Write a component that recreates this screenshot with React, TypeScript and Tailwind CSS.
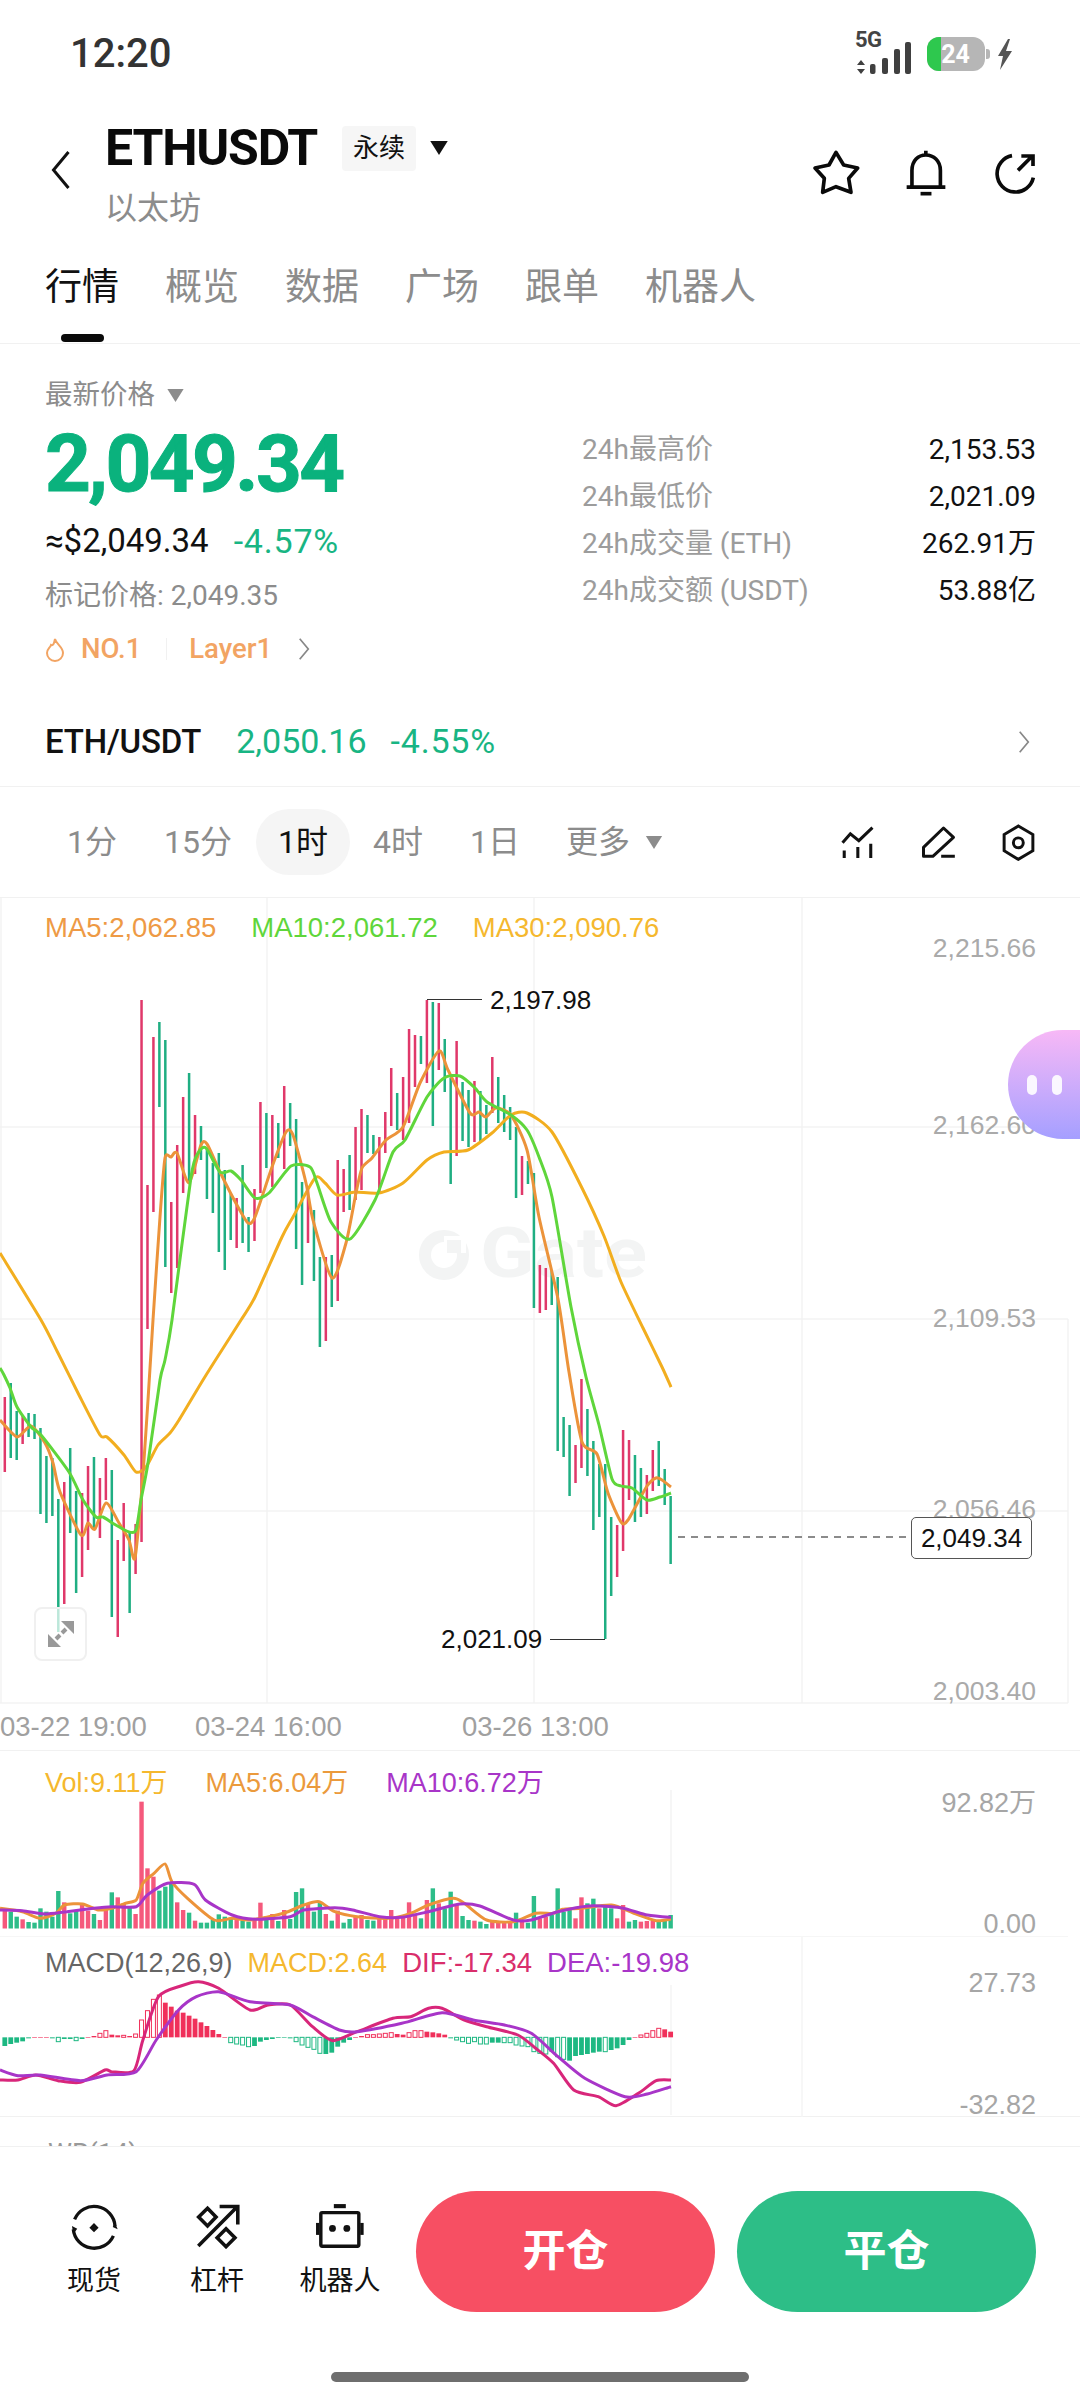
import React from "react";

type P = [number, number];

const CANDLES = "r1397,1472 g1383,1458 g1411,1460 r1415,1444 g1413,1437 g1414,1439 g1428,1514 g1456,1523 g1458,1516 g1499,1632 r1482,1604 g1448,1533 g1491,1593 r1493,1577 r1466,1550 g1457,1529 r1478,1538 r1458,1500 g1470,1617 r1540,1637 r1503,1561 g1533,1613 r1524,1574 r1000,1542 r1185,1329 r1037,1212 g1022,1107 g1040,1267 r1202,1293 r1145,1268 r1097,1193 g1073,1183 r1115,1174 g1126,1160 g1148,1199 g1163,1213 g1153,1252 g1170,1270 g1193,1240 r1198,1248 g1165,1243 g1217,1252 r1189,1241 r1102,1193 g1113,1168 r1115,1187 g1123,1158 r1086,1169 g1103,1146 g1119,1249 g1182,1285 r1190,1243 g1210,1281 g1257,1347 r1257,1341 g1255,1307 r1160,1301 r1169,1212 g1155,1210 r1127,1200 r1109,1190 g1115,1153 g1135,1154 r1137,1193 r1112,1153 r1068,1126 g1093,1130 r1077,1140 r1029,1123 r1035,1087 g1036,1064 r1000,1083 g1002,1126 r1003,1070 g1039,1092 g1078,1184 r1041,1156 g1082,1141 g1090,1147 r1081,1142 g1091,1141 g1105,1134 r1057,1113 g1077,1123 g1095,1132 g1107,1140 g1127,1198 r1156,1195 g1161,1184 g1173,1308 r1265,1313 r1268,1310 g1270,1305 g1277,1451 g1417,1457 g1425,1496 r1445,1483 r1379,1468 g1409,1476 g1441,1530 g1464,1517 g1464,1639 g1517,1596 r1525,1577 r1430,1551 r1440,1500 g1455,1522 g1468,1517 r1475,1514 r1450,1491 g1441,1486 g1469,1505 g1496,1564"
  .split(" ")
  .map((s) => {
    const [a, b] = s.slice(1).split(",").map(Number);
    return { red: s[0] === "r", a, b };
  });

const VOLS = "r510 g515 g530 r538 g546 g548 g505 g515 g530 g453 r487 g520 g510 r490 r512 g522 r540 r505 g457 r472 r490 g500 r522 r185 r385 r410 g452 g440 g430 r487 r510 g518 r542 g548 g548 g540 g523 g530 g535 r540 g542 g545 r535 r488 g530 r522 g543 r510 g537 g456 g445 r490 g515 g488 r522 g542 r512 g548 g537 r530 r525 g540 g542 r530 r530 r510 r530 r525 r487 r525 g535 r480 g445 r490 g505 g455 r495 g528 g540 r542 g545 g552 r545 r548 r545 r545 g518 r540 g548 g468 r535 r530 g525 g445 g515 g510 r535 r472 g490 g476 r505 g500 g505 r535 r495 g545 g540 r545 r543 r543 g543 g540 g525"
  .split(" ")
  .map((s) => ({ red: s[0] === "r", top: Number(s.slice(1)) }));

const HIST = "918 912 908 904 895 892 892 892 895 905h 897 897 902h 897 891 888 880h 872h 884 886 886h 888 882h 840h 812h 778h 765h 788 800 812 818 827 836 847 858 870 882 892 908h 912h 915h 920h 918 905 900 897 894 893 895 905h 915h 922h 928h 940h 942 938 920 908 900 892 888 884h 884h 882h 880h 878h 882 884 878h 872h 872h 875 877 880 884 895 900h 905h 910h 905h 912h 912h 908 908 908h 908h 915h 918h 920h 935h 940h 942h 935 950h 958h 962 948 945 942 938 935 935h 930 925 915 900 892 885h 880h 872h 865h 868 875"
  .split(" ")
  .map((s) => ({ v: parseFloat(s), hollow: s.endsWith("h") }));

const MA30: P[] = [[0,1253],[41,1320],[58,1353],[79,1395],[100,1435],[107,1437],[124,1455],[136,1472],[146,1467],[158,1445],[170,1433],[179,1420],[203,1380],[220,1353],[241,1320],[255,1297],[282,1237],[293,1217],[315,1178],[325,1183],[337,1195],[355,1192],[379,1193],[403,1183],[427,1160],[444,1152],[468,1150],[492,1133],[511,1115],[527,1113],[552,1132],[582,1188],[604,1236],[621,1282],[643,1328],[662,1367],[671,1387]];
const MA10: P[] = [[0,1368],[4,1375],[10,1388],[17,1407],[31,1427],[41,1435],[69,1472],[83,1500],[96,1517],[103,1517],[114,1524],[129,1532],[136,1530],[141,1500],[148,1463],[160,1380],[165,1360],[172,1320],[191,1177],[198,1153],[206,1148],[220,1172],[231,1171],[241,1180],[255,1198],[269,1193],[291,1166],[310,1167],[317,1183],[331,1222],[350,1239],[375,1200],[393,1152],[405,1140],[427,1097],[444,1078],[460,1076],[475,1088],[487,1102],[511,1115],[527,1130],[539,1157],[552,1197],[571,1307],[586,1377],[599,1425],[612,1479],[621,1486],[632,1488],[647,1500],[660,1497],[671,1493]];
const MA5: P[] = [[0,1420],[17,1437],[31,1426],[45,1443],[53,1463],[60,1492],[81,1535],[88,1523],[95,1529],[106,1503],[119,1523],[129,1540],[135,1558],[142,1487],[148,1400],[153,1320],[160,1217],[165,1158],[171,1157],[177,1153],[189,1183],[201,1145],[207,1144],[220,1172],[238,1207],[248,1223],[255,1217],[272,1167],[286,1132],[293,1135],[306,1183],[313,1220],[332,1278],[346,1243],[356,1193],[362,1168],[372,1158],[386,1140],[403,1127],[420,1083],[439,1051],[448,1070],[470,1113],[479,1112],[486,1117],[496,1108],[511,1115],[527,1150],[539,1217],[558,1299],[569,1372],[582,1442],[597,1454],[608,1493],[621,1522],[628,1520],[647,1486],[656,1478],[662,1480],[671,1487]];

const z6 = (pts: P[]): P[] => pts.map(([x, y]) => [x / 2.24, 1740 + y / 3]);
const VMA5 = z6([[0,505],[50,515],[90,535],[125,520],[145,495],[185,492],[220,510],[250,505],[280,490],[305,480],[320,430],[345,400],[370,372],[385,425],[420,475],[480,540],[520,535],[560,540],[635,520],[680,495],[715,485],[750,515],[800,530],[870,535],[920,520],[960,495],[1015,475],[1040,490],[1090,540],[1150,545],[1200,520],[1240,520],[1260,508],[1300,505],[1370,495],[1420,520],[1470,542],[1503,537]]);
const VMA10 = z6([[0,510],[50,512],[100,522],[150,515],[210,505],[250,500],[305,500],[330,465],[375,430],[435,433],[460,480],[520,525],[570,538],[650,530],[680,510],[750,503],[790,510],[850,530],[900,532],[960,515],[1030,492],[1075,498],[1150,540],[1190,540],[1250,515],[1320,498],[1390,503],[1450,525],[1503,532]]);
const DIF = z6([[0,1020],[40,1020],[80,1005],[130,1022],[180,1027],[235,990],[250,995],[300,992],[320,900],[355,770],[405,738],[445,725],[490,745],[560,810],[600,795],[650,795],[700,860],[745,902],[800,875],[880,835],[920,830],[960,805],[990,805],[1040,840],[1090,860],[1160,885],[1200,925],[1240,970],[1285,1050],[1340,1070],[1380,1097],[1430,1060],[1470,1022],[1503,1020]]);
const DEA = z6([[0,990],[40,1007],[90,1005],[180,1022],[240,1005],[305,995],[350,900],[400,810],[440,770],[490,755],[560,785],[650,795],[700,830],[760,870],[800,875],[900,850],[990,818],[1060,840],[1130,855],[1190,880],[1250,950],[1310,1015],[1400,1070],[1450,1062],[1503,1040]]);

const cx = (i: number) => 4.8 + 5.945 * i;

function smooth(pts: P[]): string {
  let d = `M${pts[0][0]} ${pts[0][1]}`;
  for (let i = 0; i < pts.length - 1; i++) {
    const p0 = pts[Math.max(0, i - 1)];
    const p1 = pts[i];
    const p2 = pts[i + 1];
    const p3 = pts[Math.min(pts.length - 1, i + 2)];
    const t = 0.12;
    d += ` C${(p1[0] + (p2[0] - p0[0]) * t).toFixed(1)} ${(p1[1] + (p2[1] - p0[1]) * t).toFixed(1)} ${(p2[0] - (p3[0] - p1[0]) * t).toFixed(1)} ${(p2[1] - (p3[1] - p1[1]) * t).toFixed(1)} ${p2[0].toFixed(1)} ${p2[1].toFixed(1)}`;
  }
  return d;
}

const Chev = ({ className }: { className: string }) => (
  <svg viewBox="0 0 14 28" className={className} fill="none" stroke="currentColor" strokeWidth="2">
    <path d="M2 2 L12 14 L2 26" />
  </svg>
);

const Tri = ({ className }: { className: string }) => (
  <svg viewBox="0 0 20 16" className={className} fill="currentColor">
    <path d="M0 0 H20 L10 16 Z" />
  </svg>
);

function StatusBar() {
  return (
    <div className="flex h-[108px] items-center justify-between pl-[70px] pr-[68px]">
      <span className="text-[40px] font-medium leading-none text-[#333]">12:20</span>
      <div className="flex items-center">
        <div className="relative h-[40px] w-[58px]">
          <span className="absolute left-0 top-[-6px] text-[22px] font-bold leading-[24px] tracking-[-0.5px] text-[#444]">5G</span>
          <svg viewBox="855 30 58 40" className="h-[40px] w-[58px]" fill="#404040">
            <path d="M857 61 L861 56 L865 61 Z M857 65 L861 70 L865 65 Z" />
            <rect x="870" y="60" width="5.5" height="10" rx="2" />
            <rect x="882" y="54" width="6" height="16" rx="2" />
            <rect x="894" y="45" width="6" height="25" rx="2" />
            <rect x="905" y="38" width="6" height="32" rx="2" />
          </svg>
        </div>
        <div className="ml-[14px] flex items-center">
          <div className="relative flex h-[34px] w-[58px] items-center overflow-hidden rounded-[12px] bg-[#b6b6b6]">
            <div className="h-full w-[14px] bg-[#2ec84e]" />
            <span className="absolute left-[14px] w-[29px] text-center text-[25px] font-bold leading-none text-white">24</span>
          </div>
          <div className="ml-[1px] h-[10px] w-[4px] rounded-r-[3px] bg-[#b6b6b6]" />
        </div>
        <svg viewBox="0 0 15 31" className="ml-[7px] h-[31px] w-[15px]" fill="#555">
          <path d="M11 0 L1 17 H6 L3 31 L15 12 H9 L13 0 Z" />
        </svg>
      </div>
    </div>
  );
}

function Header() {
  return (
    <div className="flex h-[143px] items-start pl-[50px] pr-[44px]">
      <Chev className="mt-[41px] h-[42px] w-[22px] -scale-x-100 text-[#111]" />
      <div className="ml-[33px] flex flex-col">
        <div className="flex h-[80px] items-center">
          <span className="text-[50px] font-bold leading-none tracking-[-1.2px] text-[#0a0a0a]">ETHUSDT</span>
          <span className="ml-[25px] flex h-[45px] w-[74px] items-center justify-center rounded-[4px] bg-[#f6f6f6] text-[26px] text-[#111]">永续</span>
          <Tri className="ml-[13px] h-[14px] w-[20px] text-[#111]" />
        </div>
        <span className="mt-[-2px] text-[32px] leading-[44px] text-[#8c8c8c]">以太坊</span>
      </div>
      <div className="ml-auto mt-[40px] flex items-center">
        <svg viewBox="30 52 150 150" className="h-[50px] w-[50px]" fill="none" stroke="#0a0a0a" strokeWidth="11" strokeLinejoin="round">
          <path d="M105 65 L128 103 L170 112 L143 143 L150 185 L105 168 L65 185 L70 143 L42 112 L84 103 Z" />
        </svg>
        <svg viewBox="310 50 130 145" className="ml-[44px] h-[48px] w-[43px]" fill="none" stroke="#0a0a0a" strokeWidth="11">
          <path d="M373 55 V70 M331 162 V115 C331 85 350 68 373 68 C396 68 417 85 417 115 V162 M315 165 H432" />
          <path d="M357 185 H390" />
        </svg>
        <svg viewBox="572 60 132 132" className="ml-[44px] h-[44px] w-[44px]" fill="none" stroke="#0a0a0a" strokeWidth="11">
          <path d="M632 74 A55 55 0 1 0 696 140" />
          <path d="M650 118 L690 78 M660 75 H695 V105" />
        </svg>
      </div>
    </div>
  );
}

function Tabs() {
  const tabs = ["概览", "数据", "广场", "跟单", "机器人"];
  return (
    <div className="flex h-[93px] gap-[46px] border-b border-[#f1f1f1] pl-[45px] text-[37px] leading-[74px] text-[#8c8c8c]">
      <div className="flex flex-col items-center text-[#111]">
        <span>行情</span>
        <span className="mt-[9px] h-[8px] w-[43px] rounded-full bg-[#0a0a0a]" />
      </div>
      {tabs.map((t) => (
        <span key={t}>{t}</span>
      ))}
    </div>
  );
}

function Stat({ k, v }: { k: string; v: string }) {
  return (
    <div className="flex h-[47px] items-center justify-between">
      <span className="text-[#9c9c9c]">{k}</span>
      <span className="text-[#111]">{v}</span>
    </div>
  );
}

function Info() {
  return (
    <div className="flex h-[353px] pl-[45px] pr-[44px] pt-[31px] text-[27.5px]">
      <div className="flex w-[537px] flex-col">
        <div className="flex h-[40px] items-center text-[#8c8c8c]">
          <span>最新价格</span>
          <Tri className="ml-[12px] h-[13px] w-[17px] text-[#8c8c8c]" />
        </div>
        <div className="flex h-[98px] items-center text-[80px] font-bold leading-none tracking-[-2.6px] text-[#0ab27d] [-webkit-text-stroke:1px_#0ab27d]">2,049.34</div>
        <div className="flex h-[56px] items-center">
          <span className="text-[33px] text-[#111]">≈$2,049.34</span>
          <span className="ml-[25px] text-[34px] tracking-[0.8px] text-[#18b583]">-4.57%</span>
        </div>
        <div className="flex h-[54px] items-center text-[28px] text-[#8c8c8c]">标记价格: 2,049.35</div>
        <div className="flex h-[52px] items-center text-[#f2a463]">
          <svg viewBox="0 0 20 25" className="h-[25px] w-[20px]" fill="none" stroke="#f2a463" strokeWidth="2">
            <path d="M10 2 C11 7 18 10 18 16 a8 8 0 0 1 -16 0 C2 12 5 11 6 8 C8 9 9 7 10 2Z" />
          </svg>
          <span className="ml-[16px] font-medium">NO.1</span>
          <span className="ml-[25px] h-[22px] w-[1px] bg-[#f1f1f1]" />
          <span className="ml-[22px] font-medium">Layer1</span>
          <Chev className="ml-[26px] h-[24px] w-[12px] text-[#888]" />
        </div>
      </div>
      <div className="mt-[51px] flex-1 text-[28px]">
        <Stat k="24h最高价" v="2,153.53" />
        <Stat k="24h最低价" v="2,021.09" />
        <Stat k="24h成交量 (ETH)" v="262.91万" />
        <Stat k="24h成交额 (USDT)" v="53.88亿" />
      </div>
    </div>
  );
}

function SpotRow() {
  return (
    <div className="flex h-[90px] items-center border-b border-[#f1f1f1] pl-[45px] pr-[50px] text-[34px]">
      <span className="text-[33px] font-medium tracking-[-0.2px] text-[#111]">ETH/USDT</span>
      <span className="ml-[35px] text-[#18b583]">2,050.16</span>
      <span className="ml-[24px] tracking-[0.8px] text-[#18b583]">-4.55%</span>
      <Chev className="ml-auto h-[24px] w-[12px] text-[#888]" />
    </div>
  );
}

function Timeframes() {
  return (
    <div className="flex h-[111px] items-center border-b border-[#f1f1f1] pl-[45px] pr-[44px] text-[32px] text-[#8c8c8c]">
      <span className="flex h-[66px] w-[94px] items-center justify-center">1分</span>
      <span className="ml-[12px] flex h-[66px] w-[94px] items-center justify-center">15分</span>
      <span className="ml-[11px] flex h-[66px] w-[94px] items-center justify-center rounded-full bg-[#f5f5f5] text-[#111]">1时</span>
      <span className="ml-[1px] flex h-[66px] w-[94px] items-center justify-center">4时</span>
      <span className="ml-[3px] flex h-[66px] w-[94px] items-center justify-center">1日</span>
      <span className="ml-[24px]">更多</span>
      <Tri className="ml-[15px] h-[13px] w-[18px] text-[#8c8c8c]" />
      <div className="ml-auto flex items-center">
        <svg viewBox="35 40 105 100" className="h-[34px] w-[36px]" fill="none" stroke="#111" strokeWidth="9">
          <path d="M42 92 L65 66 L90 86 L130 48 M47 115 V137 M87 105 V137 M125 95 V137" />
        </svg>
        <svg viewBox="272 38 110 102" className="ml-[44px] h-[34px] w-[37px]" fill="none" stroke="#111" strokeWidth="9" strokeLinejoin="round">
          <path d="M282 105 L342 47 L372 75 L310 132 H282 Z M335 132 H376" />
        </svg>
        <svg viewBox="515 38 105 112" className="ml-[44px] h-[37px] w-[35px]" fill="none" stroke="#111" strokeWidth="9">
          <path d="M567 44 L611 70 V119 L567 145 L524 119 V70 Z" />
          <circle cx="567" cy="95" r="15" />
        </svg>
      </div>
    </div>
  );
}

function MainChart() {
  return (
    <div className="relative h-[852px] font-[family-name:'Liberation_Sans','Noto_Sans_CJK_SC',sans-serif] text-[27px]">
      <svg viewBox="0 898 1080 852" className="absolute inset-0 h-[852px] w-[1080px]" fill="none">
        <path d="M0 1127 H1068 M0 1319 H1068 M0 1511 H1068 M0 1703 H1068 M1 898 V1703 M267 898 V1703 M534 898 V1703 M802 898 V1703 M1068 1319 V1703" stroke="#f3f3f3" strokeWidth="1.5" />
        <text x="480" y="1277" fontFamily="Roboto" fontWeight="700" fontSize="70" fill="#f3f4f4" textLength="167" lengthAdjust="spacingAndGlyphs">Gate</text>
        <circle cx="444" cy="1255" r="19" stroke="#f3f4f4" strokeWidth="12" />
        <rect x="444" y="1236" width="22" height="17" fill="#ffffff" />
        <rect x="447" y="1240" width="14" height="13" fill="#f3f4f4" />
        {CANDLES.map((c, i) => (
          <rect key={i} x={cx(i) - 1.25} y={c.a} width="2.5" height={c.b - c.a} fill={c.red ? "#e0386a" : "#1fae82"} />
        ))}
        <path d={smooth(MA30)} stroke="#f2ae1f" strokeWidth="3" strokeLinejoin="round" />
        <path d={smooth(MA5)} stroke="#ec933a" strokeWidth="3" strokeLinejoin="round" />
        <path d={smooth(MA10)} stroke="#5fd63b" strokeWidth="3" strokeLinejoin="round" />
        <path d="M427 999.5 H482 M550 1639.5 H605" stroke="#333" strokeWidth="1.2" />
        <path d="M678 1537 H911" stroke="#666" strokeWidth="1.3" strokeDasharray="7 6" />
      </svg>
      <div className="relative flex h-[60px] items-center gap-[35px] pl-[45px] text-[27.5px]">
        <span className="text-[#ee9a45]">MA5:2,062.85</span>
        <span className="text-[#5fd63b]">MA10:2,061.72</span>
        <span className="text-[#f5b82e]">MA30:2,090.76</span>
      </div>
      <span className="absolute right-[44px] top-[34px] text-[26.5px] leading-[32px] text-[#aaa]">2,215.66</span>
      <span className="absolute right-[44px] top-[211px] text-[26.5px] leading-[32px] text-[#aaa]">2,162.60</span>
      <span className="absolute right-[44px] top-[404px] text-[26.5px] leading-[32px] text-[#aaa]">2,109.53</span>
      <span className="absolute right-[44px] top-[595px] text-[26.5px] leading-[32px] text-[#aaa]">2,056.46</span>
      <span className="absolute right-[44px] top-[777px] text-[26.5px] leading-[32px] text-[#aaa]">2,003.40</span>
      <span className="absolute left-[0px] top-[813px] text-[27.5px] leading-[32px] text-[#a0a0a0]">03-22 19:00</span>
      <span className="absolute left-[195px] top-[813px] text-[27.5px] leading-[32px] text-[#a0a0a0]">03-24 16:00</span>
      <span className="absolute left-[462px] top-[813px] text-[27.5px] leading-[32px] text-[#a0a0a0]">03-26 13:00</span>
      <span className="absolute left-[490px] top-[86px] text-[26px] leading-[32px] text-[#111]">2,197.98</span>
      <span className="absolute left-[441px] top-[725px] text-[26px] leading-[32px] text-[#111]">2,021.09</span>
      <span className="absolute left-[911px] top-[619px] flex h-[42px] w-[121px] items-center justify-center rounded-[5px] border border-[#555] bg-white text-[26px] text-[#111]">2,049.34</span>
      <div className="absolute left-[34px] top-[709px] flex h-[54px] w-[53px] items-center justify-center rounded-[8px] border-2 border-[#f0f0f0] bg-white/70">
        <svg viewBox="0 0 26 26" className="h-[26px] w-[26px]" fill="#999" stroke="none">
          <path d="M13 0 H26 V13 Z M0 13 V26 H13 Z" />
          <path d="M18 8 L14 12 M8 18 L12 14" stroke="#999" strokeWidth="4" />
        </svg>
      </div>
      <div className="absolute right-0 top-[132px] flex h-[109px] w-[72px] items-center justify-center gap-[15px] rounded-l-[56px] bg-gradient-to-b from-[#f7b8f6] to-[#a59fff]">
        <span className="h-[20px] w-[10px] rounded-full bg-white/90" />
        <span className="h-[20px] w-[10px] rounded-full bg-white/90" />
      </div>
    </div>
  );
}

function VolumePane() {
  return (
    <div className="relative h-[187px] border-t border-[#f1f1f1] font-[family-name:'Liberation_Sans','Noto_Sans_CJK_SC',sans-serif] text-[27px]">
      <svg viewBox="0 1750 1080 187" className="absolute left-0 top-[-1px] h-[187px] w-[1080px]" fill="none">
        <path d="M671 1790 V1928" stroke="#f3f3f3" strokeWidth="1.5" />
        <path d="M0 1937 H1068" stroke="#f3f3f3" strokeWidth="1.5" />
        {VOLS.map((b, i) => {
          const top = 1740 + b.top / 3;
          return <rect key={i} x={cx(i) - 2.2} y={top} width="4.4" height={1928.5 - top} fill={b.red ? "#f5597c" : "#2dbd89"} />;
        })}
        <path d={smooth(VMA5)} stroke="#ec933a" strokeWidth="3" />
        <path d={smooth(VMA10)} stroke="#a835c8" strokeWidth="3" />
      </svg>
      <div className="relative flex h-[64px] items-center gap-[38px] pl-[45px]">
        <span className="text-[#f5b82e]">Vol:9.11万</span>
        <span className="text-[#eb9a3c]">MA5:6.04万</span>
        <span className="text-[#a835c8]">MA10:6.72万</span>
      </div>
      <span className="absolute right-[44px] top-[36px] leading-[32px] text-[#a6a6a6]">92.82万</span>
      <span className="absolute right-[44px] top-[157px] leading-[32px] text-[#a6a6a6]">0.00</span>
    </div>
  );
}

function MacdPane() {
  const zero = 1740 + 892 / 3;
  return (
    <div className="relative h-[180px] border-b border-[#f1f1f1] font-[family-name:'Liberation_Sans','Noto_Sans_CJK_SC',sans-serif] text-[27px]">
      <svg viewBox="0 1937 1080 180" className="absolute inset-0 h-[180px] w-[1080px]" fill="none">
        <path d="M671 1985 V2115 M802 1937 V2117" stroke="#f5f5f5" strokeWidth="1.5" />
        {HIST.map((h, i) => {
          const y = 1740 + h.v / 3;
          const red = y <= zero;
          const col = red ? "#f0305a" : "#1db882";
          const top = Math.min(y, zero);
          const ht = Math.max(Math.abs(y - zero), 0.6);
          return h.hollow ? (
            <rect key={i} x={cx(i) - 2} y={top} width="4" height={ht} stroke={col} strokeWidth="1" />
          ) : (
            <rect key={i} x={cx(i) - 2.4} y={top} width="4.8" height={ht} fill={col} />
          );
        })}
        <path d={smooth(DIF)} stroke="#d8267a" strokeWidth="3" />
        <path d={smooth(DEA)} stroke="#a835c8" strokeWidth="3" />
      </svg>
      <div className="relative flex h-[52px] items-center gap-[15px] pl-[45px]">
        <span className="text-[#666]">MACD(12,26,9)</span>
        <span className="text-[#f5b82e]">MACD:2.64</span>
        <span className="text-[27.5px] text-[#d92e6b]">DIF:-17.34</span>
        <span className="text-[27.5px] text-[#a835c8]">DEA:-19.98</span>
      </div>
      <span className="absolute right-[44px] top-[30px] leading-[32px] text-[#a6a6a6]">27.73</span>
      <span className="absolute right-[44px] top-[152px] leading-[32px] text-[#a6a6a6]">-32.82</span>
    </div>
  );
}

function BottomBar() {
  return (
    <div className="flex flex-1 flex-col border-t border-[#f1f1f1]">
      <div className="flex h-[208px] items-center pr-[44px]">
        <div className="flex w-[416px] pl-[45px] text-[27px] text-[#111]">
          <div className="flex w-[98px] flex-col items-center">
            <svg viewBox="60 212 146 146" className="h-[48px] w-[48px]" fill="none" stroke="#111" strokeWidth="10">
              <path d="M74 262 A64 64 0 0 1 197 282" />
              <path d="M192 312 A64 64 0 0 1 70 292" />
              <path d="M133 273 L147 287 L133 301 L119 287 Z" fill="#111" stroke="none" />
              <path d="M190 285 L205 292 L197 272 Z M66 282 L82 290 L70 306 Z" fill="#111" stroke="none" />
            </svg>
            <span className="mt-[12px] leading-[36px]">现货</span>
          </div>
          <div className="ml-[25px] flex w-[98px] flex-col items-center">
            <svg viewBox="435 226 132 128" className="h-[46px] w-[47px]" fill="none" stroke="#111" strokeWidth="10">
              <path d="M447 346 L555 237 M507 235 H558 V286" />
              <path d="M473 240 L497 265 L473 290 L448 265 Z M525 298 L550 323 L525 348 L500 323 Z" />
            </svg>
            <span className="mt-[14px] leading-[36px]">杠杆</span>
          </div>
          <div className="ml-[25px] flex w-[98px] flex-col items-center">
            <svg viewBox="805 220 146 132" className="h-[46px] w-[50px]" fill="#111">
              <rect x="860" y="222" width="35" height="12" />
              <rect x="822" y="247" width="111" height="98" rx="4" fill="none" stroke="#111" strokeWidth="10" />
              <rect x="808" y="277" width="10" height="35" />
              <rect x="937" y="277" width="10" height="35" />
              <circle cx="856" cy="293" r="10" />
              <circle cx="898" cy="293" r="10" />
            </svg>
            <span className="mt-[14px] whitespace-nowrap leading-[36px]">机器人</span>
          </div>
        </div>
        <div className="flex flex-1 gap-[22px] text-[43px] font-bold text-white">
          <div className="flex h-[121px] flex-1 items-center justify-center rounded-full bg-[#f74f63]">开仓</div>
          <div className="flex h-[121px] flex-1 items-center justify-center rounded-full bg-[#2dbe87]">平仓</div>
        </div>
      </div>
      <div className="mt-[17px] flex justify-center">
        <span className="h-[10px] w-[418px] rounded-full bg-[#6e6e6e]" />
      </div>
    </div>
  );
}

export default function App() {
  return (
    <div className="flex h-[2400px] w-[1080px] flex-col overflow-hidden bg-white font-[family-name:Roboto,'Noto_Sans_CJK_SC',sans-serif]">
      <StatusBar />
      <Header />
      <Tabs />
      <Info />
      <SpotRow />
      <Timeframes />
      <MainChart />
      <VolumePane />
      <MacdPane />
      <div className="h-[29px] overflow-hidden pl-[48px] pt-[24px] text-[27px] leading-none text-[#999]">WR(14)</div>
      <BottomBar />
    </div>
  );
}
